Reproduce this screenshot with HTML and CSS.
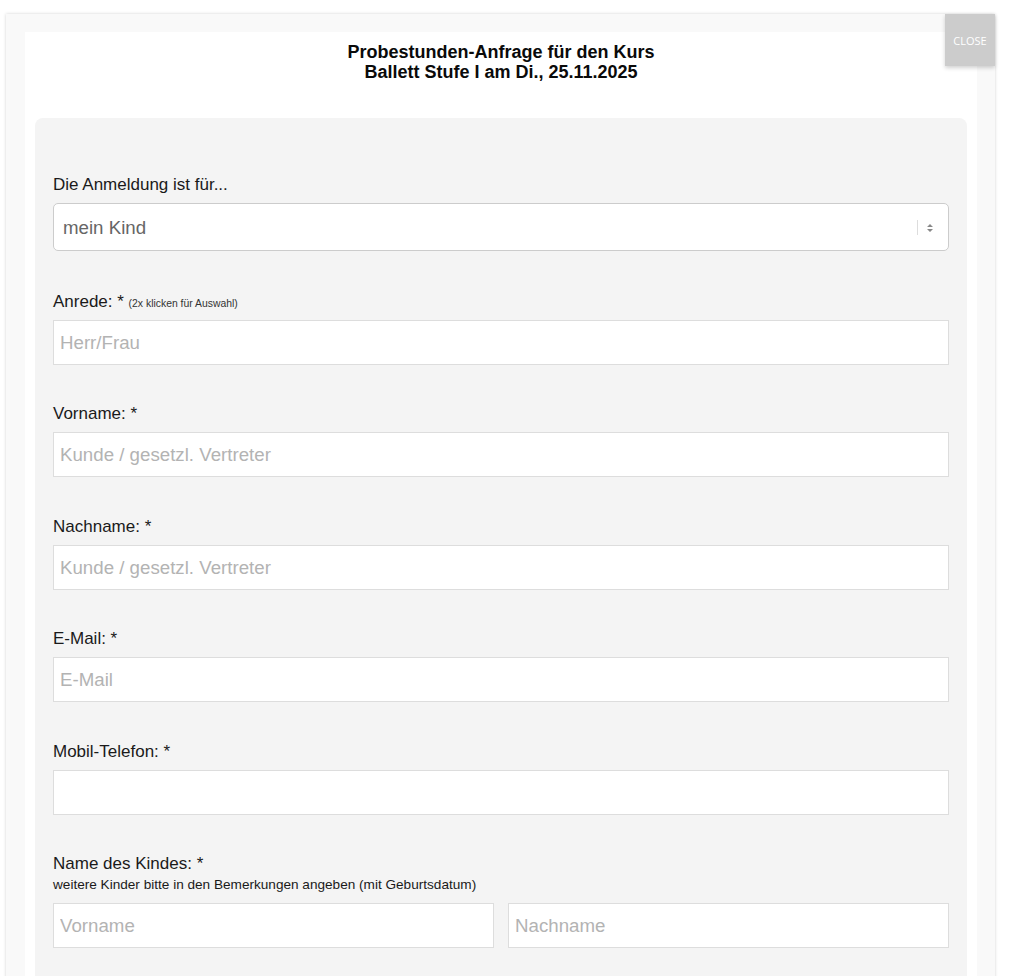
FILE: index.html
```html
<!DOCTYPE html>
<html lang="de">
<head>
<meta charset="utf-8">
<title>Probestunden-Anfrage</title>
<link rel="stylesheet" href="styles.css">
</head>
<body>
<div class="modal">
  <button class="close" type="button">CLOSE</button>
  <div class="content">
    <h1 class="title">Probestunden-Anfrage für den Kurs<br>Ballett Stufe I am Di., 25.11.2025</h1>
    <form class="form">
      <div class="field field-select">
        <label class="label">Die Anmeldung ist für...</label>
        <div class="select">
          <span class="select-value">mein Kind</span>
          <span class="select-sep"></span>
          <svg class="select-arrows" width="8" height="10" viewBox="0 0 8 10"><path d="M1 4 L4 1 L7 4 Z M1 6 L4 9 L7 6 Z" fill="#888"/></svg>
        </div>
      </div>
      <div class="field">
        <label class="label">Anrede: * <span class="note">(2x klicken für Auswahl)</span></label>
        <input class="input" type="text" placeholder="Herr/Frau">
      </div>
      <div class="field">
        <label class="label">Vorname: *</label>
        <input class="input" type="text" placeholder="Kunde / gesetzl. Vertreter">
      </div>
      <div class="field">
        <label class="label">Nachname: *</label>
        <input class="input" type="text" placeholder="Kunde / gesetzl. Vertreter">
      </div>
      <div class="field">
        <label class="label">E-Mail: *</label>
        <input class="input" type="text" placeholder="E-Mail">
      </div>
      <div class="field">
        <label class="label">Mobil-Telefon: *</label>
        <input class="input" type="text">
      </div>
      <div class="field">
        <label class="label">Name des Kindes: *</label>
        <div class="hint">weitere Kinder bitte in den Bemerkungen angeben (mit Geburtsdatum)</div>
        <div class="pair">
          <input class="input" type="text" placeholder="Vorname">
          <input class="input" type="text" placeholder="Nachname">
        </div>
      </div>
    </form>
  </div>
</div>
</body>
</html>
```

FILE: styles.css
```css
html, body {
  margin: 0;
  padding: 0;
  overflow: hidden;
  background: #ffffff;
  font-family: "Liberation Sans", Arial, sans-serif;
}

.modal {
  position: relative;
  margin: 14px 0 0 6px;
  width: 989px;
  box-sizing: border-box;
  padding: 18px 18px 0 19px;
  background: #f9f9f9;
  box-shadow: 0 0 3px rgba(0, 0, 0, 0.18);
  height: 1100px;
}

.close {
  position: absolute;
  top: 0;
  right: 0;
  width: 50px;
  height: 52px;
  border: none;
  padding: 0;
  background: #cccccc;
  color: #ffffff;
  font-family: "Open Sans", sans-serif;
  font-size: 11px;
  box-shadow: 0 2px 4px rgba(0, 0, 0, 0.18);
  z-index: 2;
}

.content {
  background: #ffffff;
  padding: 10px 10px 0 10px;
  height: 1100px;
}

.title {
  margin: 0;
  text-align: center;
  font-size: 18px;
  line-height: 20px;
  font-weight: bold;
  color: #0a0a0a;
}

.form {
  margin-top: 36px;
  background: #f4f4f4;
  border-radius: 8px;
  padding: 54px 18px 60px 18px;
  display: flex;
  flex-direction: column;
}

.field {
  display: flex;
  flex-direction: column;
  margin-bottom: 36.4px;
}

.field-select {
  margin-bottom: 38px;
}

.label {
  font-size: 17px;
  line-height: 24px;
  color: #1a1a1a;
  padding-top: 1px;
  margin-bottom: 6px;
}

.note {
  font-size: 10.4px;
  line-height: 1;
  color: #333333;
}

.hint {
  font-size: 13.6px;
  line-height: 18px;
  color: #1a1a1a;
  margin-top: -6px;
  margin-bottom: 9px;
}

.select {
  height: 48px;
  box-sizing: border-box;
  border: 1px solid #cccccc;
  border-radius: 5px;
  background: #ffffff;
  display: flex;
  align-items: center;
  padding: 1px 14px 0 9px;
}

.select-value {
  flex: 1;
  font-size: 18.7px;
  color: #666666;
}

.select-sep {
  width: 1px;
  height: 15px;
  background: #dddddd;
  margin-right: 8px;
}

.select-arrows {
  display: block;
}

.input {
  height: 45px;
  box-sizing: border-box;
  border: 1px solid #dddddd;
  border-radius: 0;
  background: #ffffff;
  padding: 1px 6px 0 6px;
  font-family: "Liberation Sans", Arial, sans-serif;
  font-size: 18.7px;
  color: #333333;
  outline: none;
  width: 100%;
}

.input::placeholder {
  color: #b3b3b3;
}

.pair {
  display: grid;
  grid-template-columns: 1fr 1fr;
  gap: 14px;
}
```
